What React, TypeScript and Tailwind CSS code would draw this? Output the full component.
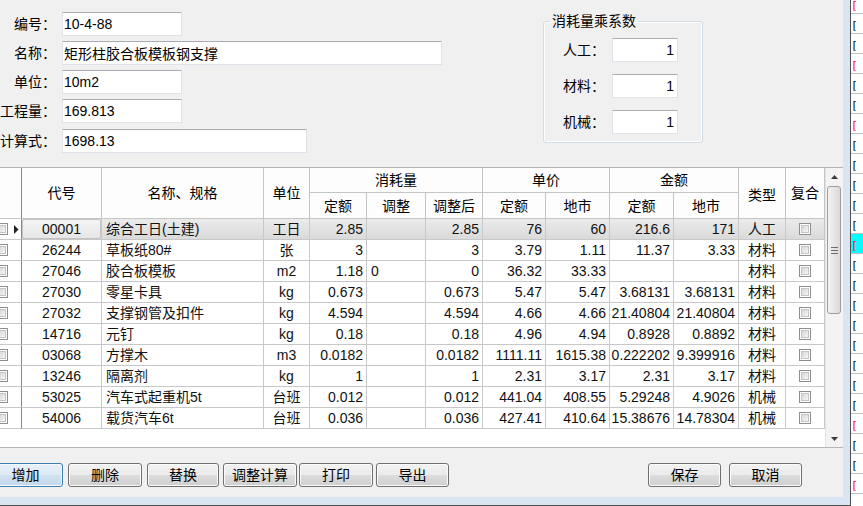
import React from 'react';

type Row = string[];

// code, name, unit, 定额, 调整, 调整后, 单价定额, 单价地市, 金额定额, 金额地市, 类型
const rows: Row[] = [
  ['00001', '综合工日(土建)', '工日', '2.85', '', '2.85', '76', '60', '216.6', '171', '人工'],
  ['26244', '草板纸80#', '张', '3', '', '3', '3.79', '1.11', '11.37', '3.33', '材料'],
  ['27046', '胶合板模板', 'm2', '1.18', '0', '0', '36.32', '33.33', '', '', '材料'],
  ['27030', '零星卡具', 'kg', '0.673', '', '0.673', '5.47', '5.47', '3.68131', '3.68131', '材料'],
  ['27032', '支撑钢管及扣件', 'kg', '4.594', '', '4.594', '4.66', '4.66', '21.40804', '21.40804', '材料'],
  ['14716', '元钉', 'kg', '0.18', '', '0.18', '4.96', '4.94', '0.8928', '0.8892', '材料'],
  ['03068', '方撑木', 'm3', '0.0182', '', '0.0182', '1111.11', '1615.38', '0.222202', '9.399916', '材料'],
  ['13246', '隔离剂', 'kg', '1', '', '1', '2.31', '3.17', '2.31', '3.17', '材料'],
  ['53025', '汽车式起重机5t', '台班', '0.012', '', '0.012', '441.04', '408.55', '5.29248', '4.9026', '机械'],
  ['54006', '载货汽车6t', '台班', '0.036', '', '0.036', '427.41', '410.64', '15.38676', '14.78304', '机械'],
];

const redRows = [0, 3, 6, 12, 21, 24];

function Check() {
  return (
    <span className="block h-[12px] w-[12px] border border-[#8f8f8f] bg-white p-[1px]">
      <span className="block h-full w-full border border-[#c4c4c4] bg-linear-to-br from-[#d6d6d6] to-[#f6f6f6]" />
    </span>
  );
}

function Field({ label, value, width }: { label: string; value: string; width: string }) {
  return (
    <div className="flex items-center">
      <div className="flex w-[56px] justify-end whitespace-nowrap">{label}</div>
      <input
        readOnly
        value={value}
        className={`ml-[6px] h-[24px] ${width} border border-[#dfe2e8] border-t-[#abadb3] bg-white px-[1px] outline-none`}
      />
    </div>
  );
}

function Factor({ label }: { label: string }) {
  return (
    <div className="flex items-center">
      <div className="w-[42px] whitespace-nowrap">{label}</div>
      <input
        readOnly
        value="1"
        className="ml-[7px] h-[24px] w-[66px] border border-[#dfe2e8] border-t-[#abadb3] bg-white pr-[3px] text-right outline-none"
      />
    </div>
  );
}

function Btn({ label, cls, focus }: { label: string; cls: string; focus?: boolean }) {
  return (
    <button
      className={
        focus
          ? `${cls} h-[24px] rounded-[3px] border border-[#3c7fb1] bg-[linear-gradient(#e8f1f9,#dde9f4_50%,#d0e2f1_50%,#c3d9ec)] shadow-[inset_0_0_0_1px_#f4f9fd]`
          : `${cls} h-[24px] rounded-[3px] border border-[#707070] bg-[linear-gradient(#f2f2f2,#ebebeb_50%,#dddddd_50%,#cfcfcf)] shadow-[inset_0_0_0_1px_#fbfbfb]`
      }
    >
      {label}
    </button>
  );
}

function Grid() {
  const head = 'flex items-center justify-center border-r border-b border-[#c5c5c5]';
  return (
    <div className="flex h-[281px] border-t border-b border-[#b5b5b5]">
      <div className="flex-1 bg-white">
        {/* header */}
        <div className="grid grid-cols-[22px_80px_162px_46px_57px_59px_57px_63px_64px_64px_65px_47px_39px] grid-rows-[25px_26px] bg-[#fdfdfd]">
          <div className="row-span-2 border-r border-b border-r-[#8a8a8a] border-b-[#c5c5c5]" />
          <div className={`${head} row-span-2`}>代号</div>
          <div className={`${head} row-span-2`}>名称、规格</div>
          <div className={`${head} row-span-2`}>单位</div>
          <div className={`${head} col-span-3`}>消耗量</div>
          <div className={`${head} col-span-2`}>单价</div>
          <div className={`${head} col-span-2`}>金额</div>
          <div className={`${head} row-span-2 pt-[3px]`}>类型</div>
          <div className={`${head} row-span-2`}>复合</div>
          <div className={head}>定额</div>
          <div className={head}>调整</div>
          <div className={head}>调整后</div>
          <div className={head}>定额</div>
          <div className={head}>地市</div>
          <div className={head}>定额</div>
          <div className={head}>地市</div>
        </div>
        {/* body */}
        {rows.map((r, i) => {
          const cell = 'flex items-center overflow-hidden whitespace-nowrap border-r border-b border-[#c8c8c8]';
          const num = `${cell} justify-end pr-[3px]`;
          return (
            <div
              key={r[0]}
              className={
                i === 0
                  ? 'grid h-[21px] grid-cols-[22px_80px_162px_46px_57px_59px_57px_63px_64px_64px_65px_47px_39px] bg-linear-to-b from-[#ebebeb] to-[#d9d9d9] text-[#111]'
                  : 'grid h-[21px] grid-cols-[22px_80px_162px_46px_57px_59px_57px_63px_64px_64px_65px_47px_39px] text-[#111]'
              }
            >
              <div className="flex items-center border-r border-b border-r-[#8a8a8a] border-b-[#c8c8c8] bg-white">
                <span className="-ml-[4px]">
                  <Check />
                </span>
                {i === 0 && (
                  <svg width="5" height="9" viewBox="0 0 5 9" className="ml-[6px]">
                    <polygon points="0,0 4.5,4.5 0,9" fill="#222" />
                  </svg>
                )}
              </div>
              {i === 0 ? (
                <div className="border-r border-b border-[#c8c8c8]">
                  <div className="flex h-full items-center justify-center rounded-[2px] border border-[#c2c2c2] bg-linear-to-b from-[#f4f4f4] to-[#e6e6e6]">
                    {r[0]}
                  </div>
                </div>
              ) : (
                <div className={`${cell} justify-center`}>{r[0]}</div>
              )}
              <div className={`${cell} pl-[4px]`}>{r[1]}</div>
              <div className={`${cell} justify-center`}>{r[2]}</div>
              <div className={num}>{r[3]}</div>
              <div className={`${cell} pl-[4px]`}>{r[4]}</div>
              <div className={num}>{r[5]}</div>
              <div className={num}>{r[6]}</div>
              <div className={num}>{r[7]}</div>
              <div className={num}>{r[8]}</div>
              <div className={num}>{r[9]}</div>
              <div className={`${cell} justify-center`}>{r[10]}</div>
              <div className={`${cell} justify-center`}>
                <Check />
              </div>
            </div>
          );
        })}
      </div>
      {/* scrollbar */}
      <div className="flex w-[18px] flex-col border-l border-[#e3e3e3] bg-[#f3f3f3]">
        <div className="flex h-[17px] items-center justify-center">
          <svg width="7" height="4" viewBox="0 0 7 4">
            <polygon points="0,4 3.5,0 7,4" fill="#3c3c3c" />
          </svg>
        </div>
        <div className="flex-1 pl-[1px] pr-[2px] pt-[1px]">
          <div className="flex h-[128px] flex-col items-center justify-center gap-[2px] rounded-[3px] border border-[#9e9e9e] bg-linear-to-r from-[#f3f3f3] to-[#d9d9d9]">
            <span className="h-px w-[7px] bg-[#6b6b6b]" />
            <span className="h-px w-[7px] bg-[#6b6b6b]" />
            <span className="h-px w-[7px] bg-[#6b6b6b]" />
          </div>
        </div>
        <div className="flex h-[17px] items-center justify-center">
          <svg width="7" height="4" viewBox="0 0 7 4">
            <polygon points="0,0 7,0 3.5,4" fill="#3c3c3c" />
          </svg>
        </div>
      </div>
    </div>
  );
}

function Strip() {
  const items = Array.from({ length: 25 }, (_, i) => i);
  return (
    <div className="flex h-[506px] w-[12px] flex-col overflow-hidden bg-white">
      {items.map((i) => (
        <div
          key={i}
          className={
            (i === 0 ? 'h-[14px] ' : 'h-[20px] ') +
            (i === 12 ? 'bg-[#00ffff] ' : '') +
            'flex shrink-0 items-end border-b border-[#c0c0c0] pb-[2px] font-["DejaVu_Sans_Mono",monospace] text-[11px] leading-[11px]'
          }
        >
          <span className={redRows.includes(i) ? 'text-[#ff0000]' : 'text-black'}>[</span>
        </div>
      ))}
    </div>
  );
}

export default function App() {
  return (
    <div className="flex h-[506px] w-[863px] overflow-hidden bg-white font-['Liberation_Sans','Noto_Sans_CJK_SC',sans-serif] text-[14px] leading-[16px] text-black">
      <div className="border-r border-b border-[#4f4f4f]">
        <div className="border-r-[7px] border-b-[8px] border-[#d9e5f2]">
          <div className="flex h-[497px] w-[843px] flex-col overflow-hidden bg-[#f0f0f0]">
            {/* top form */}
            <div className="flex h-[167px] shrink-0">
              <div className="flex flex-col gap-[5px] pt-[12px]">
                <Field label="编号：" value="10-4-88" width="w-[120px]" />
                <Field label="名称：" value="矩形柱胶合板模板钢支撑" width="w-[380px]" />
                <Field label="单位：" value="10m2" width="w-[120px]" />
                <Field label="工程量：" value="169.813" width="w-[120px]" />
                <div className="pt-px">
                  <Field label="计算式：" value="1698.13" width="w-[245px]" />
                </div>
              </div>
              <fieldset className="ml-[101px] mt-[13px] h-[130px] w-[160px] rounded-[3px] border border-[#d3dce3] shadow-[inset_0_0_0_1px_#ffffff]">
                <legend className="ml-[6px] px-[2px] leading-[16px]">消耗量乘系数</legend>
                <div className="flex flex-col gap-[12px] pl-[19px] pt-[9px]">
                  <Factor label="人工：" />
                  <Factor label="材料：" />
                  <Factor label="机械：" />
                </div>
              </fieldset>
            </div>
            <Grid />
            {/* buttons */}
            <div className="flex pt-[15px]">
              <Btn label="增加" cls="-ml-[12px] w-[75px]" focus />
              <Btn label="删除" cls="ml-[5px] w-[74px]" />
              <Btn label="替换" cls="ml-[5px] w-[72px]" />
              <Btn label="调整计算" cls="ml-[4px] w-[74px]" />
              <Btn label="打印" cls="ml-[2px] w-[74px]" />
              <Btn label="导出" cls="ml-[3px] w-[73px]" />
              <Btn label="保存" cls="ml-[199px] w-[73px]" />
              <Btn label="取消" cls="ml-[8px] w-[73px]" />
            </div>
          </div>
        </div>
      </div>
      <Strip />
    </div>
  );
}
